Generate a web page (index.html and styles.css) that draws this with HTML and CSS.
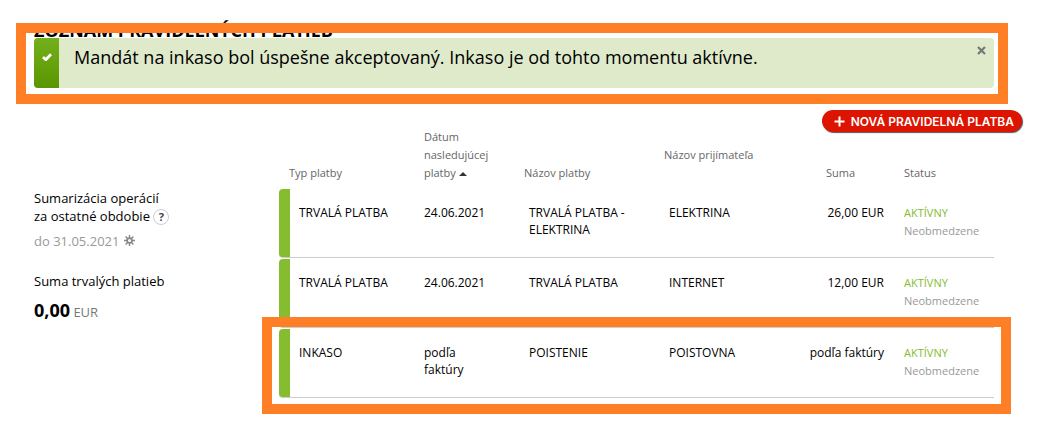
FILE: index.html
```html
<!DOCTYPE html>
<html lang="sk">
<head>
  <meta charset="UTF-8">
  <title>Zoznam pravidelných platieb</title>
  <meta name="viewport" content="width=device-width, initial-scale=1.0">
  <link rel="stylesheet" href="styles.css">
</head>
<body>
  <main class="page">
    <h1 class="page-title">Zoznam pravidelných platieb</h1>

    <div class="alert highlight-alert" role="status">
      <div class="alert-icon">
        <svg width="10" height="8" viewBox="0 0 10 8" aria-hidden="true"><path d="M1 4l2.8 2.7L9 1.2" fill="none" stroke="#fff" stroke-width="2.8"/></svg>
      </div>
      <p class="alert-text">Mandát na inkaso bol úspešne akceptovaný. Inkaso je od tohto momentu aktívne.</p>
      <button class="alert-close" type="button" aria-label="Zavrieť">
        <svg width="9" height="9" viewBox="0 0 9 9" aria-hidden="true"><path d="M1 1l7 7M8 1L1 8" fill="none" stroke="#777" stroke-width="2.2"/></svg>
      </button>
    </div>

    <div class="toolbar">
      <button class="btn-new" type="button">
        <svg width="11" height="11" viewBox="0 0 11 11" aria-hidden="true"><path d="M5.5 0.5v10M0.5 5.5h10" fill="none" stroke="#fff" stroke-width="2"/></svg>
        Nová pravidelná platba
      </button>
    </div>

    <div class="content">
      <aside class="summary">
        <p class="summary-title">Sumarizácia operácií<br>za ostatné obdobie
          <button class="help" type="button" aria-label="Pomocník">?</button>
        </p>
        <p class="summary-date">do 31.05.2021
          <button class="settings" type="button" aria-label="Nastavenia">
            <svg width="11" height="11" viewBox="0 0 11 11" aria-hidden="true">
              <path d="M5.5 0v11M0 5.5h11M1.6 1.6l7.8 7.8M9.4 1.6L1.6 9.4" stroke="#888" stroke-width="1.4"/>
              <circle cx="5.5" cy="5.5" r="2.4" fill="#fff" stroke="#888" stroke-width="1.8"/>
            </svg>
          </button>
        </p>
        <p class="summary-label">Suma trvalých platieb</p>
        <p class="summary-amount"><strong>0,00</strong> EUR</p>
      </aside>

      <table class="payments">
        <colgroup>
          <col class="col-type">
          <col class="col-date">
          <col class="col-name">
          <col class="col-payee">
          <col class="col-sum">
          <col class="col-status">
        </colgroup>
        <thead>
          <tr>
            <th scope="col">Typ platby</th>
            <th scope="col" aria-sort="ascending">Dátum nasledujúcej platby <svg width="8" height="4" viewBox="0 0 8 4" aria-hidden="true"><path d="M0 4L4 0l4 4z" fill="#333"/></svg></th>
            <th scope="col" class="tight">Názov platby</th>
            <th scope="col" class="tight">Názov prijímateľa<br>&nbsp;</th>
            <th scope="col" class="sum">Suma</th>
            <th scope="col">Status</th>
          </tr>
        </thead>
        <tbody>
          <tr>
            <td>TRVALÁ PLATBA</td>
            <td class="date">24.06.2021</td>
            <td>TRVALÁ PLATBA - ELEKTRINA</td>
            <td>ELEKTRINA</td>
            <td class="sum">26,00 EUR</td>
            <td class="status"><span class="active">AKTÍVNY</span><br>Neobmedzene</td>
          </tr>
          <tr>
            <td>TRVALÁ PLATBA</td>
            <td class="date">24.06.2021</td>
            <td>TRVALÁ PLATBA</td>
            <td>INTERNET</td>
            <td class="sum">12,00 EUR</td>
            <td class="status"><span class="active">AKTÍVNY</span><br>Neobmedzene</td>
          </tr>
          <tr class="highlight-row">
            <td>INKASO</td>
            <td class="date">podľa faktúry</td>
            <td>POISTENIE</td>
            <td>POISTOVNA</td>
            <td class="sum">podľa faktúry</td>
            <td class="status"><span class="active">AKTÍVNY</span><br>Neobmedzene</td>
          </tr>
        </tbody>
      </table>
    </div>
  </main>
</body>
</html>
```
FILE: styles.css
```css
/* Reset & base */
*, *::before, *::after {
  box-sizing: border-box;
}
body {
  margin: 0;
  font-family: 'Open Sans', 'Noto Sans', sans-serif;
  font-size: 12px;
  line-height: 18px;
  color: #000;
  background-color: #fff;
}
h1, p {
  margin: 0;
}
button {
  font-family: inherit;
  border: 0;
  padding: 0;
  cursor: pointer;
}
svg {
  display: inline-block;
}

.page {
  padding: 20px 46px 28px 34px;
}
.page-title {
  margin-bottom: -2px;
  font-size: 18px;
  line-height: 20px;
  font-weight: 700;
  text-transform: uppercase;
}

/* Alert */
.alert {
  position: relative;
  display: flex;
  min-height: 50px;
  border-radius: 4px;
  background-color: #dfeacb;
}
.alert-icon {
  flex: 0 0 25px;
  padding-top: 10px;
  text-align: center;
  border-radius: 4px 0 0 4px;
  background: linear-gradient(#73b01c, #5a9600);
}
.alert-text {
  flex: 1;
  padding: 7px 15px;
  font-size: 18px;
  line-height: 24px;
}
.alert-close {
  align-self: flex-start;
  padding: 8px;
  line-height: 9px;
  background: none;
}
.alert-close svg {
  display: block;
}

/* Highlight frames */
.highlight-row {
  position: relative;
}
.highlight-alert::after,
.highlight-row::after {
  content: "";
  position: absolute;
  border: 10px solid #ff7f27;
  pointer-events: none;
}
.highlight-alert::after {
  inset: -15px -14px -16px -18px;
}
.highlight-row::after {
  inset: -12px -17px -16px -17px;
}

/* Toolbar */
.toolbar {
  display: flex;
  justify-content: flex-end;
  margin: 22px -28px -5px 0;
}
.btn-new {
  display: flex;
  align-items: center;
  gap: 6px;
  height: 22px;
  padding: 0 8px 0 12px;
  border-radius: 11px;
  font-family: Inter, 'Open Sans', sans-serif;
  font-size: 12px;
  font-weight: 600;
  text-transform: uppercase;
  white-space: nowrap;
  color: #fff;
  background-color: #dc1400;
  box-shadow: 1px 1px 1px #555;
}

.content {
  display: flex;
}

/* Summary */
.summary {
  flex: 0 0 245px;
  padding-top: 62px;
  font-size: 13px;
}
.summary-date {
  margin-top: 7px;
  color: #999;
}
.summary-label {
  margin-top: 22px;
}
.summary-amount {
  margin-top: 7px;
  line-height: 26px;
  color: #777;
}
.summary-amount strong {
  font-size: 18px;
  color: #000;
}
.help {
  width: 16px;
  height: 16px;
  border: 1px solid #ccc;
  border-radius: 50%;
  font-size: 11px;
  line-height: 14px;
  font-weight: 700;
  color: #444;
  background: #fff;
}
.settings {
  margin-left: 1px;
  background: none;
}

/* Payments table */
.payments {
  flex: 1;
  table-layout: fixed;
  width: 100%;
  border-collapse: separate;
  border-spacing: 0 1px;
}
.col-type { width: 135px; }
.col-date { width: 105px; }
.col-name { width: 140px; }
.col-payee { width: 135px; }
.col-sum { width: 100px; }
.col-status { width: 100px; }

.payments th {
  padding: 0 10px 6px;
  font-size: 11px;
  font-weight: 400;
  text-align: left;
  vertical-align: bottom;
  color: #666;
}
.payments th svg {
  vertical-align: 1px;
}
.payments th.tight {
  padding-left: 5px;
}
.payments th.sum {
  padding-right: 39px;
}
.payments td {
  height: 69px;
  padding: 15px 10px;
  line-height: 17px;
  vertical-align: top;
  border-bottom: 1px solid #ccc;
}
.payments td:first-child {
  padding-left: 20px;
  border-radius: 4px 0 0 4px;
  background: linear-gradient(#86bc30, #86bc30) no-repeat left / 11px 100%;
}
.payments td.date {
  padding-right: 30px;
}
.payments .sum {
  text-align: right;
}
.payments td.status {
  font-size: 11px;
  line-height: 18px;
  color: #999;
}
.payments .active {
  color: #86bc30;
}
```
